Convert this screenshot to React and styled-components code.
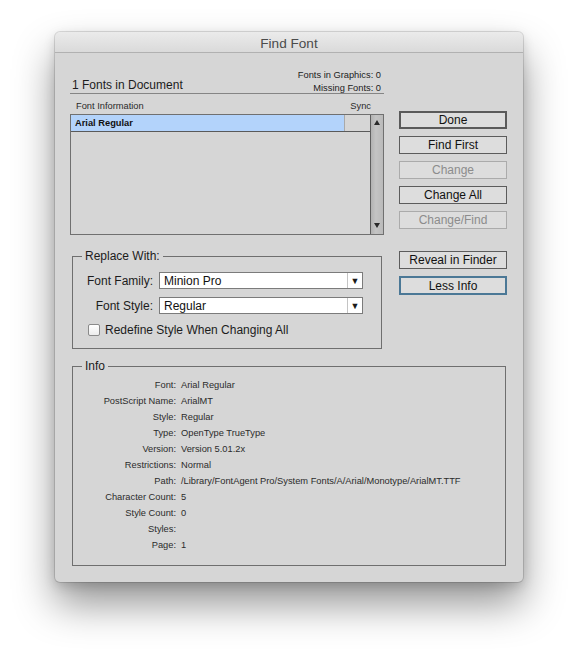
import React from "react";
import styled, { createGlobalStyle } from "styled-components";

const GlobalStyle = createGlobalStyle`
  html, body {
    margin: 0;
    padding: 0;
    background: #ffffff;
  }
  body {
    font-family: "Liberation Sans", Arial, sans-serif;
    color: #1c1c1c;
  }
`;

const infoRows = [
  ["Font:", "Arial Regular"],
  ["PostScript Name:", "ArialMT"],
  ["Style:", "Regular"],
  ["Type:", "OpenType TrueType"],
  ["Version:", "Version 5.01.2x"],
  ["Restrictions:", "Normal"],
  ["Path:", "/Library/FontAgent Pro/System Fonts/A/Arial/Monotype/ArialMT.TTF"],
  ["Character Count:", "5"],
  ["Style Count:", "0"],
  ["Styles:", ""],
  ["Page:", "1"],
];

const App = () => {
  return (
    <>
      <GlobalStyle />
      <Page>
        <Window>
          <TitleBar>Find Font</TitleBar>
          <Body>
            <Columns>
              <LeftColumn>
                {/* Document summary */}
                <Header>
                  <HeaderTitle>1 Fonts in Document</HeaderTitle>
                  <Counts>
                    <span>Fonts in Graphics: 0</span>
                    <span>Missing Fonts: 0</span>
                  </Counts>
                </Header>
                <ColumnHeads>
                  <span>Font Information</span>
                  <span>Sync</span>
                </ColumnHeads>

                {/* Font list */}
                <ListBox>
                  <ListRows>
                    <FontRow>
                      <FontName $selected>Arial Regular</FontName>
                      <SyncCell />
                    </FontRow>
                  </ListRows>
                  <ScrollBar>
                    <ScrollArrow $up />
                    <ScrollArrow />
                  </ScrollBar>
                </ListBox>

                {/* Replace with */}
                <Group $inset="9px 18px 11px 0">
                  <Legend>Replace With:</Legend>
                  <FieldGrid>
                    <FieldLabel>Font Family:</FieldLabel>
                    <Select>
                      <SelectValue>Minion Pro</SelectValue>
                      <SelectArrow>▼</SelectArrow>
                    </Select>
                    <FieldLabel>Font Style:</FieldLabel>
                    <Select>
                      <SelectValue>Regular</SelectValue>
                      <SelectArrow>▼</SelectArrow>
                    </Select>
                  </FieldGrid>
                  <CheckRow>
                    <CheckBox />
                    <span>Redefine Style When Changing All</span>
                  </CheckRow>
                </Group>
              </LeftColumn>

              <RightColumn>
                <Button $default>Done</Button>
                <Button>Find First</Button>
                <Button $disabled>Change</Button>
                <Button>Change All</Button>
                <Button $disabled>Change/Find</Button>
                <ButtonSpacer />
                <Button>Reveal in Finder</Button>
                <Button $focused>Less Info</Button>
              </RightColumn>
            </Columns>

            {/* Info */}
            <Group $inset="4px 10px 12px 0" $wide>
              <Legend>Info</Legend>
              <InfoGrid>
                {infoRows.map(([label, value]) => (
                  <React.Fragment key={label}>
                    <InfoLabel>{label}</InfoLabel>
                    <InfoValue>{value}</InfoValue>
                  </React.Fragment>
                ))}
              </InfoGrid>
            </Group>
          </Body>
        </Window>
      </Page>
    </>
  );
};

export default App;

// Styled Components
const Page = styled.div`
  width: 578px;
  height: 662px;
  padding: 32px 0 0 55px;
  box-sizing: border-box;
  overflow: hidden;
`;

const Window = styled.div`
  width: 468px;
  height: 550px;
  background: #d6d6d6;
  border-radius: 5px;
  box-shadow: 0 0 0 1px rgba(0, 0, 0, 0.12), 0 22px 40px rgba(0, 0, 0, 0.42),
    0 4px 12px rgba(0, 0, 0, 0.15);
  display: flex;
  flex-direction: column;
  overflow: hidden;
`;

const TitleBar = styled.div`
  height: 21px;
  flex: none;
  border-bottom: 1px solid #b1b1b1;
  background: linear-gradient(#ebebeb, #dadada);
  display: flex;
  align-items: center;
  justify-content: center;
  font-size: 13.6px;
  color: #4b4b4b;
  padding-top: 2px;
  box-sizing: border-box;
`;

const Body = styled.div`
  padding: 16px 16px 16px 15px;
  display: flex;
  flex-direction: column;
`;

const Columns = styled.div`
  display: flex;
  gap: 15px;
`;

const LeftColumn = styled.div`
  width: 314px;
  display: flex;
  flex-direction: column;
`;

const RightColumn = styled.div`
  width: 108px;
  padding-top: 42px;
  display: flex;
  flex-direction: column;
  gap: 7px;
`;

const Header = styled.div`
  height: 24px;
  border-bottom: 1px solid #858585;
  display: flex;
  justify-content: space-between;
  align-items: flex-end;
  padding: 0 3px 0 2px;
`;

const HeaderTitle = styled.span`
  font-size: 12px;
  line-height: 14px;
  padding-bottom: 1px;
`;

const Counts = styled.div`
  display: flex;
  flex-direction: column;
  align-items: flex-end;
  font-size: 9.3px;
  line-height: 13px;
  margin-bottom: -2px;
`;

const ColumnHeads = styled.div`
  height: 20px;
  box-sizing: border-box;
  display: flex;
  justify-content: space-between;
  align-items: center;
  padding: 3px 13px 0 6px;
  font-size: 9.3px;
  color: #2a2a2a;
`;

const ListBox = styled.div`
  height: 121px;
  box-sizing: border-box;
  border: 1px solid #707070;
  display: flex;
`;

const ListRows = styled.div`
  flex: 1;
`;

const FontRow = styled.div`
  height: 16px;
  display: flex;
  border-bottom: 1px solid #5a5a5a;
`;

const FontName = styled.div`
  flex: 1;
  background: ${(p) => (p.$selected ? "#b3d3fb" : "transparent")};
  font-size: 9.3px;
  font-weight: bold;
  line-height: 16px;
  padding-left: 4px;
  color: #111;
`;

const SyncCell = styled.div`
  width: 25px;
  border-left: 1px solid #a9a9a9;
`;

const ScrollBar = styled.div`
  width: 12px;
  border-left: 1px solid #5f5f5f;
  background: linear-gradient(90deg, #b2b2b2, #c4c4c4 40%, #bababa);
  display: flex;
  flex-direction: column;
  justify-content: space-between;
  align-items: center;
  padding: 5px 0 6px;
`;

const ScrollArrow = styled.div`
  width: 0;
  height: 0;
  border-left: 3.5px solid transparent;
  border-right: 3.5px solid transparent;
  ${(p) =>
    p.$up
      ? "border-bottom: 5px solid #2a2a2a;"
      : "border-top: 5px solid #2a2a2a;"}
`;

const Group = styled.fieldset`
  margin: ${(p) => (p.$wide ? "10px 1px 0 2px" : "14px 2px 0 2px")};
  border: 1px solid #6f6f6f;
  padding: ${(p) => p.$inset};
  min-width: 0;
`;

const Legend = styled.legend`
  font-size: 12px;
  line-height: 14px;
  padding: 0 3px;
  margin-left: 9px;
  color: #1c1c1c;
`;

const FieldGrid = styled.div`
  display: grid;
  grid-template-columns: 66px 204px;
  column-gap: 6px;
  row-gap: 8px;
  align-items: center;
  margin-left: 14px;
`;

const FieldLabel = styled.span`
  justify-self: end;
  font-size: 12px;
`;

const Select = styled.div`
  height: 17px;
  box-sizing: border-box;
  background: #ffffff;
  border: 1px solid #7b7b7b;
  display: flex;
  align-items: center;
`;

const SelectValue = styled.span`
  flex: 1;
  font-size: 12px;
  padding-left: 4px;
  color: #111;
`;

const SelectArrow = styled.span`
  width: 14px;
  height: 100%;
  border-left: 1px solid #c4c4c4;
  display: flex;
  align-items: center;
  justify-content: center;
  font-size: 9px;
  color: #1a1a1a;
`;

const CheckRow = styled.div`
  margin: 9px 0 0 15px;
  display: flex;
  align-items: center;
  gap: 5px;
  font-size: 12px;
`;

const CheckBox = styled.span`
  width: 12px;
  height: 12px;
  box-sizing: border-box;
  border: 1px solid #8a8a8a;
  border-radius: 2px;
  background: linear-gradient(#ffffff, #ececec);
`;

const Button = styled.div`
  height: ${(p) => (p.$focused ? "19px" : "18px")};
  box-sizing: border-box;
  display: flex;
  align-items: center;
  justify-content: center;
  font-size: 12px;
  background: #dddddd;
  color: ${(p) => (p.$disabled ? "#8c8c8c" : "#111")};
  border: ${(p) =>
    p.$default
      ? "2px solid #5a5a5a"
      : p.$focused
      ? "2px solid #4b7896"
      : p.$disabled
      ? "1px solid #ababab"
      : "1px solid #5c5c5c"};
`;

const ButtonSpacer = styled.div`
  height: 8px;
`;

const InfoGrid = styled.div`
  display: grid;
  grid-template-columns: 103px 1fr;
  column-gap: 5px;
  font-size: 9.3px;
  line-height: 16px;
  color: #2b2b2b;
`;

const InfoLabel = styled.span`
  text-align: right;
  white-space: nowrap;
`;

const InfoValue = styled.span`
  white-space: nowrap;
  min-height: 16px;
`;
